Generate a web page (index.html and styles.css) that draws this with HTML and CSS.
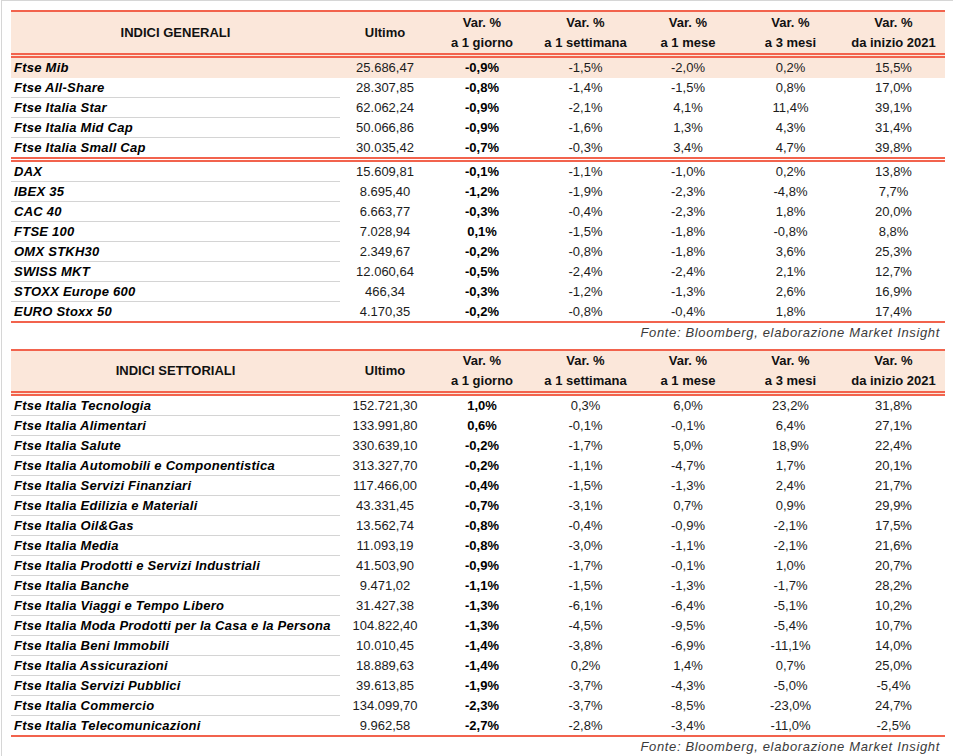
FILE: index.html
```html
<!DOCTYPE html>
<html lang="it">
<head>
<meta charset="utf-8">
<title>Indici</title>
<link rel="stylesheet" href="styles.css">
</head>
<body>
<div class="page">
  <table class="tbl">
    <colgroup>
      <col class="c-name"><col class="c-last"><col class="c-d"><col class="c-w"><col class="c-m"><col class="c-3m"><col class="c-y">
    </colgroup>
    <thead>
      <tr>
        <th class="name-h">INDICI GENERALI</th>
        <th>Ultimo</th>
        <th>Var. %<br>a 1 giorno</th>
        <th>Var. %<br>a 1 settimana</th>
        <th>Var. %<br>a 1 mese</th>
        <th>Var. %<br>a 3 mesi</th>
        <th>Var. %<br>da inizio 2021</th>
      </tr>
    </thead>
    <tbody>
      <tr class="hl"><td class="name">Ftse Mib</td><td>25.686,47</td><td class="b">-0,9%</td><td>-1,5%</td><td>-2,0%</td><td>0,2%</td><td>15,5%</td></tr>
      <tr><td class="name">Ftse All-Share</td><td>28.307,85</td><td class="b">-0,8%</td><td>-1,4%</td><td>-1,5%</td><td>0,8%</td><td>17,0%</td></tr>
      <tr><td class="name">Ftse Italia Star</td><td>62.062,24</td><td class="b">-0,9%</td><td>-2,1%</td><td>4,1%</td><td>11,4%</td><td>39,1%</td></tr>
      <tr><td class="name">Ftse Italia Mid Cap</td><td>50.066,86</td><td class="b">-0,9%</td><td>-1,6%</td><td>1,3%</td><td>4,3%</td><td>31,4%</td></tr>
      <tr class="last"><td class="name">Ftse Italia Small Cap</td><td>30.035,42</td><td class="b">-0,7%</td><td>-0,3%</td><td>3,4%</td><td>4,7%</td><td>39,8%</td></tr>
    </tbody>
    <tbody class="grp">
      <tr><td class="name">DAX</td><td>15.609,81</td><td class="b">-0,1%</td><td>-1,1%</td><td>-1,0%</td><td>0,2%</td><td>13,8%</td></tr>
      <tr><td class="name">IBEX 35</td><td>8.695,40</td><td class="b">-1,2%</td><td>-1,9%</td><td>-2,3%</td><td>-4,8%</td><td>7,7%</td></tr>
      <tr><td class="name">CAC 40</td><td>6.663,77</td><td class="b">-0,3%</td><td>-0,4%</td><td>-2,3%</td><td>1,8%</td><td>20,0%</td></tr>
      <tr><td class="name">FTSE 100</td><td>7.028,94</td><td class="b">0,1%</td><td>-1,5%</td><td>-1,8%</td><td>-0,8%</td><td>8,8%</td></tr>
      <tr><td class="name">OMX STKH30</td><td>2.349,67</td><td class="b">-0,2%</td><td>-0,8%</td><td>-1,8%</td><td>3,6%</td><td>25,3%</td></tr>
      <tr><td class="name">SWISS MKT</td><td>12.060,64</td><td class="b">-0,5%</td><td>-2,4%</td><td>-2,4%</td><td>2,1%</td><td>12,7%</td></tr>
      <tr><td class="name">STOXX Europe 600</td><td>466,34</td><td class="b">-0,3%</td><td>-1,2%</td><td>-1,3%</td><td>2,6%</td><td>16,9%</td></tr>
      <tr class="last"><td class="name">EURO Stoxx 50</td><td>4.170,35</td><td class="b">-0,2%</td><td>-0,8%</td><td>-0,4%</td><td>1,8%</td><td>17,4%</td></tr>
    </tbody>
  </table>
  <p class="source">Fonte: Bloomberg, elaborazione Market Insight</p>

  <table class="tbl tbl-sect">
    <colgroup>
      <col class="c-name"><col class="c-last"><col class="c-d"><col class="c-w"><col class="c-m"><col class="c-3m"><col class="c-y">
    </colgroup>
    <thead>
      <tr>
        <th class="name-h">INDICI SETTORIALI</th>
        <th>Ultimo</th>
        <th>Var. %<br>a 1 giorno</th>
        <th>Var. %<br>a 1 settimana</th>
        <th>Var. %<br>a 1 mese</th>
        <th>Var. %<br>a 3 mesi</th>
        <th>Var. %<br>da inizio 2021</th>
      </tr>
    </thead>
    <tbody>
      <tr><td class="name">Ftse Italia Tecnologia</td><td>152.721,30</td><td class="b">1,0%</td><td>0,3%</td><td>6,0%</td><td>23,2%</td><td>31,8%</td></tr>
      <tr><td class="name">Ftse Italia Alimentari</td><td>133.991,80</td><td class="b">0,6%</td><td>-0,1%</td><td>-0,1%</td><td>6,4%</td><td>27,1%</td></tr>
      <tr><td class="name">Ftse Italia Salute</td><td>330.639,10</td><td class="b">-0,2%</td><td>-1,7%</td><td>5,0%</td><td>18,9%</td><td>22,4%</td></tr>
      <tr><td class="name">Ftse Italia Automobili e Componentistica</td><td>313.327,70</td><td class="b">-0,2%</td><td>-1,1%</td><td>-4,7%</td><td>1,7%</td><td>20,1%</td></tr>
      <tr><td class="name">Ftse Italia Servizi Finanziari</td><td>117.466,00</td><td class="b">-0,4%</td><td>-1,5%</td><td>-1,3%</td><td>2,4%</td><td>21,7%</td></tr>
      <tr><td class="name">Ftse Italia Edilizia e Materiali</td><td>43.331,45</td><td class="b">-0,7%</td><td>-3,1%</td><td>0,7%</td><td>0,9%</td><td>29,9%</td></tr>
      <tr><td class="name">Ftse Italia Oil&amp;Gas</td><td>13.562,74</td><td class="b">-0,8%</td><td>-0,4%</td><td>-0,9%</td><td>-2,1%</td><td>17,5%</td></tr>
      <tr><td class="name">Ftse Italia Media</td><td>11.093,19</td><td class="b">-0,8%</td><td>-3,0%</td><td>-1,1%</td><td>-2,1%</td><td>21,6%</td></tr>
      <tr><td class="name">Ftse Italia Prodotti e Servizi Industriali</td><td>41.503,90</td><td class="b">-0,9%</td><td>-1,7%</td><td>-0,1%</td><td>1,0%</td><td>20,7%</td></tr>
      <tr><td class="name">Ftse Italia Banche</td><td>9.471,02</td><td class="b">-1,1%</td><td>-1,5%</td><td>-1,3%</td><td>-1,7%</td><td>28,2%</td></tr>
      <tr><td class="name">Ftse Italia Viaggi e Tempo Libero</td><td>31.427,38</td><td class="b">-1,3%</td><td>-6,1%</td><td>-6,4%</td><td>-5,1%</td><td>10,2%</td></tr>
      <tr><td class="name">Ftse Italia Moda Prodotti per la Casa e la Persona</td><td>104.822,40</td><td class="b">-1,3%</td><td>-4,5%</td><td>-9,5%</td><td>-5,4%</td><td>10,7%</td></tr>
      <tr><td class="name">Ftse Italia Beni Immobili</td><td>10.010,45</td><td class="b">-1,4%</td><td>-3,8%</td><td>-6,9%</td><td>-11,1%</td><td>14,0%</td></tr>
      <tr><td class="name">Ftse Italia Assicurazioni</td><td>18.889,63</td><td class="b">-1,4%</td><td>0,2%</td><td>1,4%</td><td>0,7%</td><td>25,0%</td></tr>
      <tr><td class="name">Ftse Italia Servizi Pubblici</td><td>39.613,85</td><td class="b">-1,9%</td><td>-3,7%</td><td>-4,3%</td><td>-5,0%</td><td>-5,4%</td></tr>
      <tr><td class="name">Ftse Italia Commercio</td><td>134.099,70</td><td class="b">-2,3%</td><td>-3,7%</td><td>-8,5%</td><td>-23,0%</td><td>24,7%</td></tr>
      <tr class="last"><td class="name">Ftse Italia Telecomunicazioni</td><td>9.962,58</td><td class="b">-2,7%</td><td>-2,8%</td><td>-3,4%</td><td>-11,0%</td><td>-2,5%</td></tr>
    </tbody>
  </table>
  <p class="source">Fonte: Bloomberg, elaborazione Market Insight</p>
</div>
</body>
</html>
```
FILE: styles.css
```css
html, body {
  margin: 0;
  padding: 0;
  background: #ffffff;
}

.page {
  box-sizing: border-box;
  width: 952px;
  min-height: 756px;
  margin-left: 1px;
  padding: 9px 0 0 9px;
  border-top: 1px solid #d6d6d6;
  border-left: 1px solid #d6d6d6;
  font-family: "Liberation Sans", Arial, sans-serif;
  font-size: 13px;
  color: #1c1c1c;
}

.tbl {
  width: 934px;
  table-layout: fixed;
  border-collapse: separate;
  border-spacing: 0;
  border-bottom: 2px solid #f2634d;
}

.c-name { width: 329px; }
.c-last { width: 90px; }
.c-d { width: 104px; }
.c-w { width: 103px; }
.c-m { width: 102px; }
.c-3m { width: 103px; }
.c-y { width: 103px; }

.tbl th {
  background: #fbe7da;
  border-top: 2px solid #f2634d;
  border-bottom: 5px double #f2634d;
  padding: 0;
  height: 41px;
  line-height: 20px;
  font-weight: bold;
  color: #111;
  text-align: center;
  vertical-align: middle;
  white-space: nowrap;
}

.tbl-sect th {
  height: 39px;
}

.tbl td {
  padding: 0;
  height: 19px;
  line-height: 19px;
  text-align: center;
  white-space: nowrap;
  border-bottom: 1px solid transparent;
}

.tbl td.name {
  text-align: left;
  padding-left: 3px;
  font-weight: bold;
  font-style: italic;
  letter-spacing: 0.25px;
  color: #000;
  border-bottom-color: #d4d4d4;
}

.tbl td.b {
  font-weight: bold;
  color: #000;
}

.tbl tr.hl td {
  background: #fbe7da;
}

.tbl tr.hl td.name {
  border-bottom-color: #fbe7da;
}

.tbl tr.last td {
  border-bottom: 0;
}

.tbl tbody.grp tr:first-child td {
  border-top: 5px double #f2634d;
}

.source {
  margin: 0 0 6px 0;
  width: 934px;
  box-sizing: border-box;
  padding-right: 5px;
  text-align: right;
  font-style: italic;
  letter-spacing: 0.65px;
  line-height: 20px;
  color: #3a3a3a;
}
```
